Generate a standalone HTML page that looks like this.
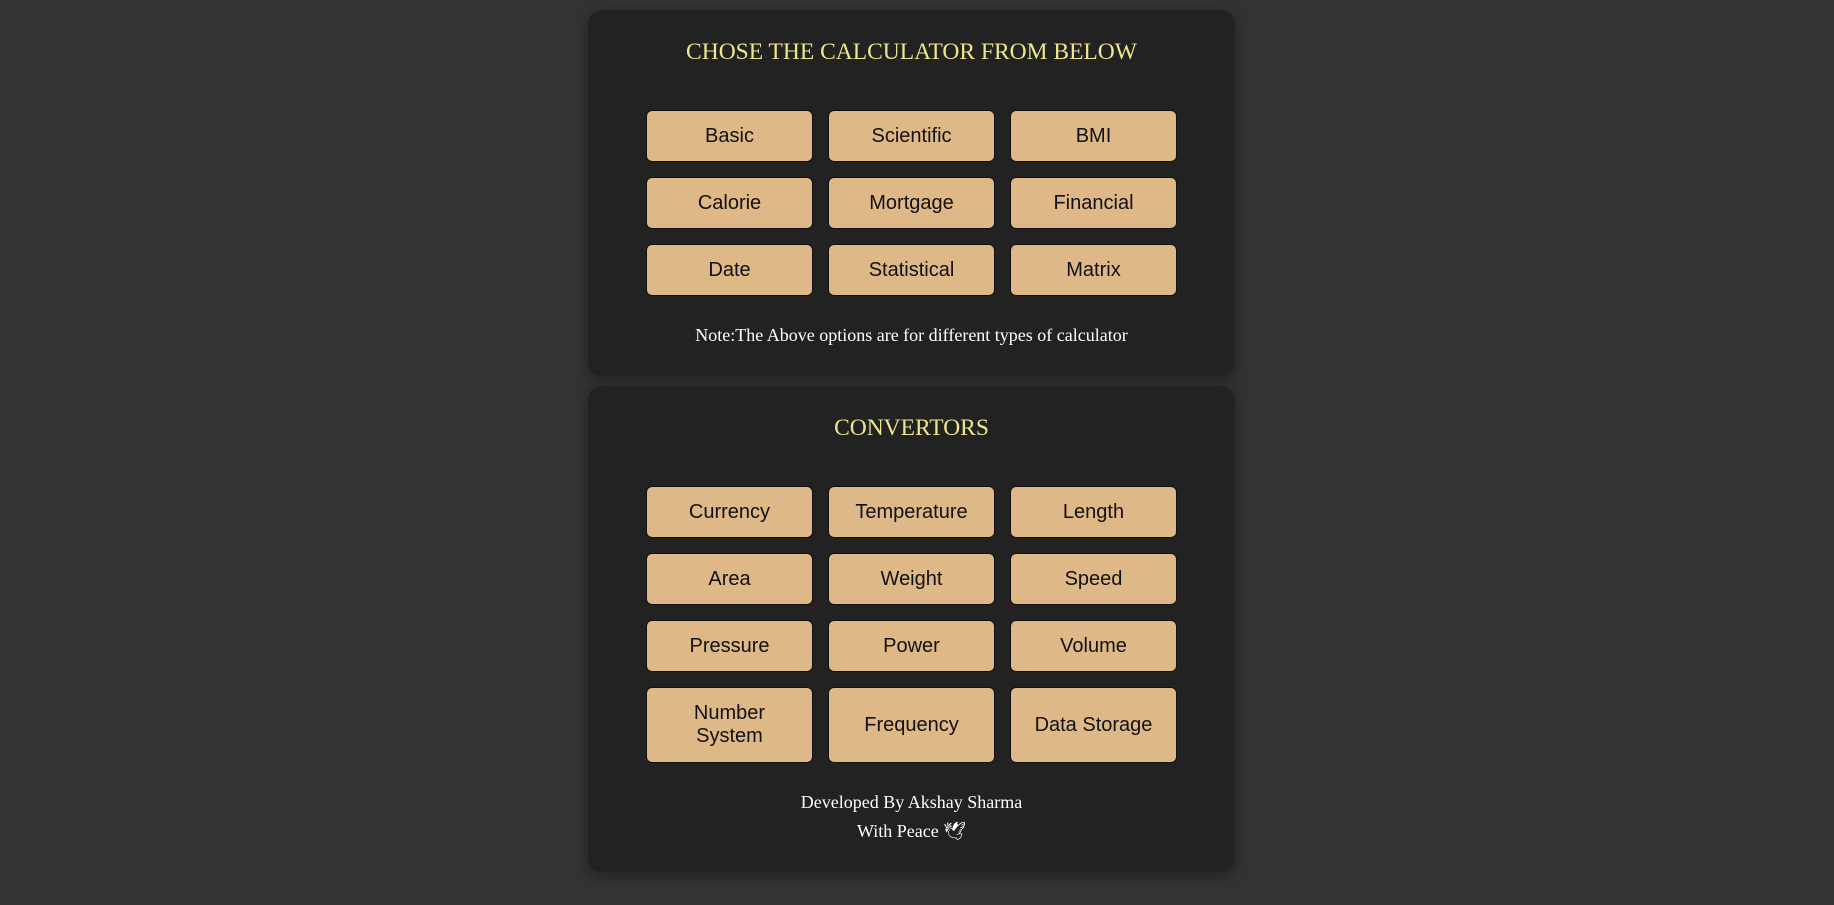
<!DOCTYPE html>
<html><head><style>
body{margin:0;background:#333;width:1834px;height:905px;overflow:hidden;font-family:"Liberation Serif",serif}
.card{position:absolute;left:588px;width:647px;background:#222;border-radius:14px;box-shadow:0 4px 14px rgba(0,0,0,.35)}
.t{position:absolute;left:0;right:0;text-align:center;color:#f0e68c;font-size:23.5px}
.g{position:absolute;left:58px;display:grid;grid-template-columns:167px 167px 167px;column-gap:15px}
.b{background:#deb887;border:1px solid #111;border-radius:6px;box-sizing:border-box;display:flex;align-items:center;justify-content:center;text-align:center;font-family:"Liberation Sans",sans-serif;font-size:20px;color:#111;line-height:23px}
.n{position:absolute;left:0;right:0;text-align:center;color:#fff;font-size:18px}
</style></head><body>
<div class="card" style="top:10px;height:366px">
<div class="t" style="top:29px">CHOSE THE CALCULATOR FROM BELOW</div>
<div class="g" style="top:100px;grid-template-rows:52px 52px 52px;row-gap:15px">
<div class="b">Basic</div><div class="b">Scientific</div><div class="b">BMI</div>
<div class="b">Calorie</div><div class="b">Mortgage</div><div class="b">Financial</div>
<div class="b">Date</div><div class="b">Statistical</div><div class="b">Matrix</div>
</div>
<div class="n" style="top:315px">Note:The Above options are for different types of calculator</div>
</div>
<div class="card" style="top:386px;height:486px">
<div class="t" style="top:29px">CONVERTORS</div>
<div class="g" style="top:100px;grid-template-rows:52px 52px 52px 76px;row-gap:15px">
<div class="b">Currency</div><div class="b">Temperature</div><div class="b">Length</div>
<div class="b">Area</div><div class="b">Weight</div><div class="b">Speed</div>
<div class="b">Pressure</div><div class="b">Power</div><div class="b">Volume</div>
<div class="b">Number<br>System</div><div class="b">Frequency</div><div class="b">Data Storage</div>
</div>
<div class="n" style="top:406px">Developed By Akshay Sharma</div>
<div class="n" style="top:435px">With Peace 🕊</div>
</div>
</body></html>
